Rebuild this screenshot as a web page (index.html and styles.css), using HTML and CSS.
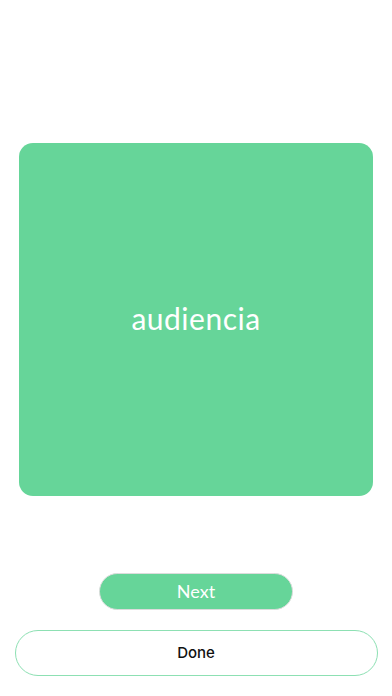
FILE: index.html
```
<!DOCTYPE html>
<html>
<head>
<meta charset="utf-8">
<link rel="stylesheet" href="styles.css">
</head>
<body>
<main class="screen">
  <section class="card"><span class="word">audiencia</span></section>
  <div class="actions">
    <button class="btn-next">Next</button>
    <button class="btn-done">Done</button>
  </div>
</main>
</body>
</html>
```
FILE: styles.css
```
html, body { margin: 0; padding: 0; background: #fff; }
body { font-family: Lato, "Open Sans", sans-serif; }
.screen {
  width: 392px; height: 696px;
  display: flex; flex-direction: column;
  padding-top: 143px; box-sizing: border-box;
}
.card {
  margin: 0 19px 0 19px;
  height: 353px;
  background: #66D599;
  border-radius: 14px;
  display: flex; align-items: center; justify-content: center;
}
.word {
  color: #fff;
  font-size: 30px;
  letter-spacing: 0.5px;
  margin-top: -4px;
}
.actions {
  display: flex; flex-direction: column; align-items: center;
  margin-top: 77px; gap: 20px;
}
.btn-next {
  width: 194px; height: 37px;
  background: #66D599;
  border: 1px solid #dcdcdc;
  border-radius: 19px;
  color: #fff;
  font-family: inherit;
  font-size: 18px;
  padding: 0 0 2px 0;
}
.btn-done {
  width: 363px; height: 46px;
  background: #fff;
  border: 1.2px solid #8DE0B3;
  border-radius: 23px;
  color: #111;
  font-family: Inter, Lato, sans-serif;
  font-size: 15px;
  font-weight: 500;
  padding: 0 0 2px 0;
}
```
